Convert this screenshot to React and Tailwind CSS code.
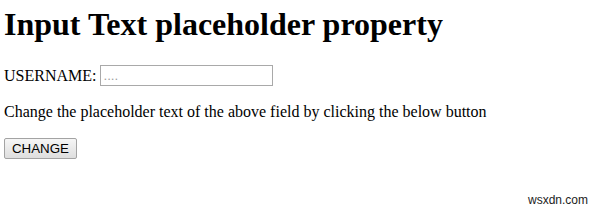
import { useState } from "react";

const serif = { fontFamily: '"Liberation Serif", "Times New Roman", serif' };

export default function App() {
  const [hint, setHint] = useState("....");

  return (
    <div className="relative h-[210px] w-[600px] overflow-hidden bg-white text-black">
      <div className="px-[4px] pt-[6px]" style={serif}>
        <h1 className="text-[32px] font-bold leading-[37px]">Input Text placeholder property</h1>

        <div className="mt-[22px] flex items-center gap-[4px] text-[16px] leading-[18px]">
          <label htmlFor="username">USERNAME:</label>
          <input
            id="username"
            type="text"
            placeholder={hint}
            className="h-[21px] w-[173px] border border-[#a9a9a9] px-[2px] text-[13.33px] outline-none placeholder:text-[#a0a0a0]"
            style={{ fontFamily: '"Liberation Sans", Arial, sans-serif' }}
          />
        </div>

        <p className="mt-[17px] text-[16px] leading-[18px]">
          Change the placeholder text of the above field by clicking the below button
        </p>

        <button
          type="button"
          onClick={() => setHint("Enter your username")}
          className="mt-[17px] h-[21px] w-[73px] rounded-[2px] border border-[#a3a3a3] bg-gradient-to-b from-[#f6f6f6] to-[#dedede] text-[13.33px] leading-[19px] text-black"
          style={{ fontFamily: '"Liberation Sans", Arial, sans-serif' }}
        >
          CHANGE
        </button>
      </div>

      <span
        className="absolute right-[12px] bottom-[3px] text-[12px] leading-[14px] text-[#222]"
        style={{ fontFamily: '"Liberation Sans", Arial, sans-serif' }}
      >
        wsxdn.com
      </span>
    </div>
  );
}
